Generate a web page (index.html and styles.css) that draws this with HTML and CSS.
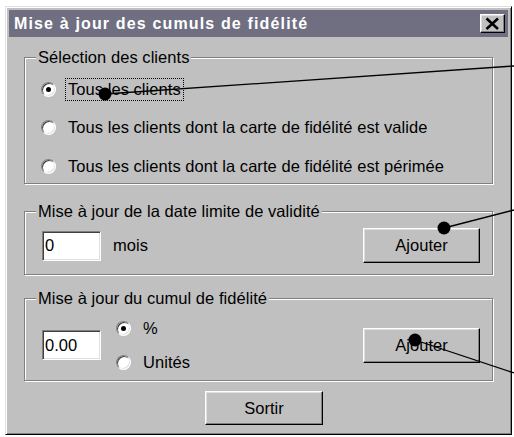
FILE: index.html
```html
<!DOCTYPE html>
<html lang="fr">
<head>
<meta charset="utf-8">
<title>Mise à jour des cumuls de fidélité</title>
<link rel="stylesheet" href="styles.css">
</head>
<body>
<div class="dialog">
  <div class="titlebar">
    <span class="title">Mise à jour des cumuls de fidélité</span>
    <button class="close" aria-label="Fermer">
      <svg width="25" height="19" viewBox="0 0 25 19"><path d="M6.5 4.5 L18 15 M18 4.5 L6.5 15" stroke="#000" stroke-width="2.6" fill="none"/></svg>
    </button>
  </div>

  <fieldset class="group g1">
    <legend>Sélection des clients</legend>
    <div class="options">
      <label class="opt"><span class="radio checked"></span><span class="lbl focus">Tous les clients</span></label>
      <label class="opt"><span class="radio"></span><span class="lbl">Tous les clients dont la carte de fidélité est valide</span></label>
      <label class="opt"><span class="radio"></span><span class="lbl">Tous les clients dont la carte de fidélité est périmée</span></label>
    </div>
  </fieldset>

  <fieldset class="group g2">
    <legend>Mise à jour de la date limite de validité</legend>
    <div class="row">
      <input class="field" type="text" value="0">
      <span class="unit">mois</span>
      <button class="btn add">Ajouter</button>
    </div>
  </fieldset>

  <fieldset class="group g3">
    <legend>Mise à jour du cumul de fidélité</legend>
    <div class="row">
      <input class="field" type="text" value="0.00">
      <div class="units">
        <label class="opt"><span class="radio checked"></span><span class="lbl">%</span></label>
        <label class="opt"><span class="radio"></span><span class="lbl">Unités</span></label>
      </div>
      <button class="btn add">Ajouter</button>
    </div>
  </fieldset>

  <div class="footer">
    <button class="btn sortir">Sortir</button>
  </div>
</div>

<svg class="annot" width="514" height="437" viewBox="0 0 514 437">
  <g stroke="#000" stroke-width="1.3" fill="none">
    <line x1="105" y1="94" x2="514" y2="66"/>
    <line x1="444" y1="228" x2="514" y2="210"/>
    <line x1="415" y1="340" x2="514" y2="373"/>
  </g>
  <g fill="#000">
    <circle cx="105" cy="94" r="6.5"/>
    <circle cx="444" cy="228" r="6.5"/>
    <circle cx="415" cy="340" r="6.5"/>
  </g>
</svg>
</body>
</html>
```

FILE: styles.css
```css
html, body {
  margin: 0;
  padding: 0;
  background: #fff;
}

body {
  position: relative;
  width: 514px;
  height: 437px;
  overflow: hidden;
  font-family: "Liberation Sans", Arial, sans-serif;
  font-size: 16.5px;
  letter-spacing: 0.05px;
  color: #000;
}

.dialog {
  box-sizing: border-box;
  width: 507px;
  height: 429px;
  margin: 6px 0 0 5px;
  padding: 3px;
  background: #c0c0c0;
  border: 1px solid;
  border-color: #dfdfdf #000 #000 #dfdfdf;
  box-shadow: inset 1px 1px 0 #fff, inset -1px -1px 0 #808080;
}

.titlebar {
  display: flex;
  align-items: center;
  height: 27px;
  background: #6f6f81;
  color: #fff;
}

.title {
  padding-left: 5px;
  font-weight: bold;
  font-size: 16px;
  letter-spacing: 1.15px;
  line-height: 27px;
  white-space: nowrap;
}

.close {
  margin-left: auto;
  margin-right: 3px;
  width: 25px;
  height: 19px;
  padding: 0;
  display: flex;
  background: #c0c0c0;
  border: 1px solid;
  border-color: #fff #000 #000 #fff;
  box-shadow: inset -1px -1px 0 #808080, inset 1px 1px 0 #dfdfdf;
}

.close svg {
  margin: -1px;
}

.group {
  box-sizing: border-box;
  width: 469px;
  margin: 0 0 0 15px;
  padding: 0 12px 0 11px;
  border: 1px solid #808080;
  box-shadow: inset 1px 1px 0 #fff, 1px 1px 0 #fff;
  min-width: 0;
}

.group legend {
  padding: 0 2px;
  line-height: 19px;
  background: #c0c0c0;
  white-space: nowrap;
}

.g1 {
  margin-top: 11px;
  padding-top: 10px;
  padding-bottom: 5px;
}

.g2 {
  margin-top: 18px;
  padding-top: 7px;
  padding-bottom: 11px;
}

.g3 {
  margin-top: 14px;
  padding-top: 8px;
  padding-bottom: 6px;
}

.options {
  display: flex;
  flex-direction: column;
  gap: 14.5px;
  padding-left: 5px;
}

.opt {
  display: flex;
  align-items: center;
  height: 24px;
}

.radio {
  position: relative;
  flex: none;
  width: 13px;
  height: 13px;
  border-radius: 50%;
  background: #fff;
  border: 1px solid;
  border-color: #808080 #fff #fff #808080;
  box-shadow: inset 1px 1px 0 #404040, inset -1px -1px 0 #dfdfdf;
}

.radio.checked::after {
  content: "";
  position: absolute;
  left: 4px;
  top: 4px;
  width: 5px;
  height: 5px;
  border-radius: 50%;
  background: #000;
}

.lbl {
  margin-left: 9px;
  padding: 0 2px;
  border: 1px dotted transparent;
  line-height: 21px;
  white-space: nowrap;
}

.lbl.focus {
  border-color: #000;
}

.row {
  display: flex;
  align-items: center;
}

.field {
  box-sizing: border-box;
  width: 59px;
  height: 30px;
  margin: 0 0 0 6px;
  padding: 0 2px;
  font: inherit;
  letter-spacing: inherit;
  color: #000;
  background: #fff;
  border: 1px solid;
  border-color: #808080 #fff #fff #808080;
  box-shadow: inset 1px 1px 0 #404040, inset -1px -1px 0 #dfdfdf;
  outline: none;
}

.unit {
  margin-left: 12px;
}

.btn {
  box-sizing: border-box;
  height: 35px;
  padding: 0;
  font: inherit;
  letter-spacing: inherit;
  color: #000;
  background: #c0c0c0;
  border: 1px solid;
  border-color: #fff #000 #000 #fff;
  box-shadow: inset -1px -1px 0 #808080, inset 1px 1px 0 #dfdfdf;
}

.add {
  margin-left: auto;
  width: 117px;
}

.units {
  display: flex;
  flex-direction: column;
  gap: 10px;
  margin-left: 15px;
}

.footer {
  margin-top: 10px;
  padding-left: 196px;
}

.sortir {
  width: 118px;
  height: 34px;
}

.annot {
  position: absolute;
  left: 0;
  top: 0;
  pointer-events: none;
}
```
